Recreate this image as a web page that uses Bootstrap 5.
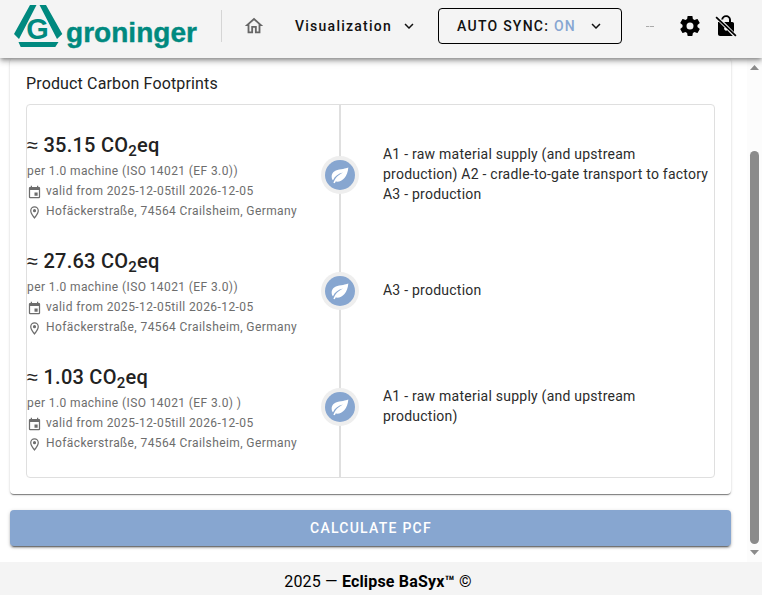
<!DOCTYPE html>
<html lang="en">
<head>
<meta charset="utf-8">
<meta name="viewport" content="width=device-width, initial-scale=1">
<title>Product Carbon Footprints</title>
<link href="https://cdn.jsdelivr.net/npm/bootstrap@5.3.0/dist/css/bootstrap.min.css" rel="stylesheet">
<style>
body{font-family:Roboto,"Liberation Sans",sans-serif;height:595px;overflow:hidden;background:#fff;color:#222}
svg{display:block;flex:none;fill:currentColor}
.shell{width:762px;height:595px}
.topbar{height:58px;padding-bottom:6px;background:#f4f4f4;box-shadow:0 2px 4px -1px rgba(0,0,0,.35),0 4px 5px rgba(0,0,0,.16),0 1px 10px rgba(0,0,0,.12);z-index:2;clip-path:inset(0 0 -16px 0)}
.brand-svg{margin-left:14px;color:#00897f}
.divider{width:1px;height:32px;background:#d5d5d5;margin-left:23px}
.home-ico{margin-left:21px;color:#666}
.nav-btn{font-size:14px;font-weight:500;letter-spacing:1.25px;color:#111;line-height:20px;padding:0;border:0;background:none}
.menu-btn{margin-left:30px}
.sync-btn{width:184px;height:36px;border:1px solid #000;border-radius:4px;margin-left:20px;padding-left:18px}
.sync-chev{margin-left:11px}
.sync-state{color:#87a6d2}
.dash{width:8px;height:1px;margin-left:24px;background:linear-gradient(90deg,#aaa 3px,#ddd 3px 4px,#aaa 4px)}
.lock-ico{margin-left:12px}
.pane{height:504px}
.main-col{width:747px;padding:0 16px 0 10px}
.pcf-card{height:436px;border:0;border-radius:4px;box-shadow:0 2px 1px -1px rgba(0,0,0,.3),0 1px 1px rgba(0,0,0,.22),0 1px 3px rgba(0,0,0,.14);padding:10px 16px 0}
.pcf-title{font-size:16px;line-height:32px;letter-spacing:.15px;margin-bottom:4px}
.frame{height:374px;border:1px solid #dfdfdf;border-radius:4px;padding:24px 0;background:linear-gradient(#dfdfdf,#dfdfdf) 312px 0/2px 100% no-repeat}
.entry{height:92px}
.entry-left{width:294px}
.amount{font-size:20px;font-weight:500;line-height:32px;height:32px;letter-spacing:.25px;white-space:nowrap}
.amount sub{font-size:15px}
.approx{font-family:"Liberation Sans",sans-serif;font-weight:400}
.meta-line{font-size:12px;line-height:20px;height:20px;letter-spacing:.4px;color:#6d6d6d;white-space:nowrap}
.node-dot{width:38px;height:38px;background:#eee}
.node-core{width:30px;height:30px;background:#87a6d0;color:#fff}
.stages{font-size:14px;line-height:20px;letter-spacing:.24px;padding-left:24px;padding-bottom:2px;color:#2b2b2b;white-space:nowrap}
.calc-btn{height:36px;margin-top:16px;background:#87a6d0;border:0;border-radius:4px;color:#fff;font-size:14px;font-weight:500;letter-spacing:1.25px;line-height:20px;padding:0 0 0 1px;box-shadow:0 3px 1px -2px rgba(0,0,0,.4),0 2px 2px rgba(0,0,0,.24),0 1px 4px rgba(0,0,0,.14)}
.track{width:15px;background:#fcfcfc;color:#8b8b8b;padding:7px 0}
.thumb{width:9px;height:393px;border-radius:5px;background:#8b8b8b;margin-bottom:6px}
.foot{height:33px;background:#f4f4f4;font-size:16px;letter-spacing:.18px;color:#000;padding:8px 6px 0 0}
</style>
</head>
<body>
<svg width="0" height="0" class="position-absolute">
<defs>
<path id="i-chev" d="M7.41,8.58L12,13.17L16.59,8.58L18,10L12,16L6,10L7.41,8.58Z"/>
<path id="i-cal" d="M19,19H5V8H19M16,1V3H8V1H6V3H5C3.89,3 3,3.89 3,5V19A2,2 0 0,0 5,21H19A2,2 0 0,0 21,19V5C21,3.89 20.1,3 19,3H18V1M17,12H12V17H17V12Z"/>
<path id="i-pin" d="M12,6.5A2.5,2.5 0 0,1 14.5,9A2.5,2.5 0 0,1 12,11.5A2.5,2.5 0 0,1 9.5,9A2.5,2.5 0 0,1 12,6.5M12,2A7,7 0 0,1 19,9C19,14.25 12,22 12,22C12,22 5,14.25 5,9A7,7 0 0,1 12,2M12,4A5,5 0 0,0 7,9C7,10 7,12 12,18.71C17,12 17,10 17,9A5,5 0 0,0 12,4Z"/>
<path id="i-leaf" d="M22,3C22,3 18,4.5 11,5.5C5,6.5 2,10 2,14C2,16 2.8,17.5 3.6,18.2C6,13 10,10.5 15.5,9C10,12 6.5,15 4,21.3L5.8,22L6.8,19.8C14,21 21,15 22,3Z"/>
</defs>
</svg>
<div class="shell d-flex flex-column">
<header class="topbar d-flex align-items-center flex-shrink-0 position-relative">
  <svg class="brand-svg" width="184" height="52" viewBox="14 0 184 52" role="img" aria-label="groninger">
    <path d="M30 5H36.5L19 39L14 34ZM39.500 5H46L62.300 34L57 39ZM18.500 42H58.500L55.300 47H20.700Z"/>
    <text x="26.300" y="39" font-family="Liberation Sans,sans-serif" font-weight="700" font-size="29" textLength="22.500" lengthAdjust="spacingAndGlyphs">G</text>
    <text x="66" y="41.500" font-family="Liberation Sans,sans-serif" font-weight="700" font-size="27.500" textLength="131" lengthAdjust="spacingAndGlyphs" stroke="currentColor" stroke-width=".4">groninger</text>
  </svg>
  <div class="divider"></div>
  <svg class="home-ico" width="22" height="24" viewBox="0 0 24 24"><path d="M12 5.69L17 10.19V18H15V12H9V18H7V10.19L12 5.69M12 3L2 12H5V20H11V14H13V20H19V12H22"/></svg>
  <button class="nav-btn menu-btn d-flex align-items-center">Visualization<svg class="ms-2" width="18" height="18" viewBox="0 0 24 24"><use href="#i-chev"/></svg></button>
  <button class="nav-btn sync-btn d-flex align-items-center"><span>AUTO SYNC: <span class="sync-state">ON</span></span><svg class="sync-chev" width="18" height="18" viewBox="0 0 24 24"><use href="#i-chev"/></svg></button>
  <div class="dash"></div>
  <svg class="ms-4 text-black" width="24" height="24" viewBox="0 0 24 24"><path d="M12,15.5A3.5,3.5 0 0,1 8.5,12A3.5,3.5 0 0,1 12,8.5A3.5,3.5 0 0,1 15.5,12A3.5,3.5 0 0,1 12,15.5M19.43,12.97C19.47,12.65 19.5,12.33 19.5,12C19.5,11.67 19.47,11.34 19.43,11L21.54,9.37C21.73,9.22 21.78,8.95 21.66,8.73L19.66,5.27C19.54,5.05 19.27,4.96 19.05,5.05L16.56,6.05C16.04,5.66 15.5,5.32 14.87,5.07L14.5,2.42C14.46,2.18 14.25,2 14,2H10C9.75,2 9.54,2.18 9.5,2.42L9.13,5.07C8.5,5.32 7.96,5.66 7.44,6.05L4.95,5.05C4.73,4.96 4.46,5.05 4.34,5.27L2.34,8.73C2.21,8.95 2.27,9.22 2.46,9.37L4.57,11C4.53,11.34 4.5,11.67 4.5,12C4.5,12.33 4.53,12.65 4.57,12.97L2.46,14.63C2.27,14.78 2.21,15.05 2.34,15.27L4.34,18.73C4.46,18.95 4.73,19.03 4.95,18.95L7.44,17.94C7.96,18.34 8.5,18.68 9.13,18.93L9.5,21.58C9.54,21.82 9.75,22 10,22H14C14.25,22 14.46,21.82 14.5,21.58L14.87,18.93C15.5,18.67 16.04,18.34 16.56,17.94L19.05,18.95C19.27,19.03 19.54,18.95 19.66,18.73L21.66,15.27C21.78,15.05 21.73,14.78 21.54,14.63L19.43,12.97Z"/></svg>
  <svg class="lock-ico text-black" width="24" height="24" viewBox="0 0 24 24"><path d="M7.2 5.600C7.700 3 9.500 1.200 12 1.200C14.800 1.200 17 3.300 17 6V8H18.200C19.300 8 20 8.800 20 9.800V18L10.200 8H15V6A2.900 2.900 0 0 0 9.200 5.600ZM4 8H5L10.500 13.500A2 2 0 0 0 13.300 16.300L18.800 22H6C4.900 22 4 21.100 4 20ZM2.700 2.500L22.500 21.200L21.300 22.500L1.500 3.700Z"/></svg>
</header>
<div class="pane d-flex flex-shrink-0">
  <main class="main-col d-flex flex-column">
    <section class="pcf-card card flex-shrink-0">
      <div class="pcf-title">Product Carbon Footprints</div>
      <div class="frame d-flex flex-column gap-4">
        <div class="entry d-flex align-items-center">
          <div class="entry-left"><div class="amount"><span class="approx">≈</span> 35.15 CO<sub>2</sub>eq</div><div class="meta-line">per 1.0 machine (ISO 14021 (EF 3.0))</div>
          <div class="meta-line d-flex"><svg class="me-1 mt-1" width="15" height="15" viewBox="0 0 24 24"><use href="#i-cal"/></svg>valid from 2025-12-05till 2026-12-05</div>
          <div class="meta-line d-flex"><svg class="me-1 mt-1" width="15" height="15" viewBox="0 0 24 24"><use href="#i-pin"/></svg>Hofäckerstraße, 74564 Crailsheim, Germany</div></div>
          <div class="node-dot rounded-circle d-flex align-items-center justify-content-center flex-shrink-0"><div class="node-core rounded-circle d-flex align-items-center justify-content-center"><svg width="20" height="20" viewBox="0 0 24 24"><use href="#i-leaf"/></svg></div></div>
          <div class="stages">A1 - raw material supply (and upstream<br>production) A2 - cradle-to-gate transport to factory<br>A3 - production</div>
        </div>
        <div class="entry d-flex align-items-center">
          <div class="entry-left"><div class="amount"><span class="approx">≈</span> 27.63 CO<sub>2</sub>eq</div><div class="meta-line">per 1.0 machine (ISO 14021 (EF 3.0))</div>
          <div class="meta-line d-flex"><svg class="me-1 mt-1" width="15" height="15" viewBox="0 0 24 24"><use href="#i-cal"/></svg>valid from 2025-12-05till 2026-12-05</div>
          <div class="meta-line d-flex"><svg class="me-1 mt-1" width="15" height="15" viewBox="0 0 24 24"><use href="#i-pin"/></svg>Hofäckerstraße, 74564 Crailsheim, Germany</div></div>
          <div class="node-dot rounded-circle d-flex align-items-center justify-content-center flex-shrink-0"><div class="node-core rounded-circle d-flex align-items-center justify-content-center"><svg width="20" height="20" viewBox="0 0 24 24"><use href="#i-leaf"/></svg></div></div>
          <div class="stages">A3 - production</div>
        </div>
        <div class="entry d-flex align-items-center">
          <div class="entry-left"><div class="amount"><span class="approx">≈</span> 1.03 CO<sub>2</sub>eq</div><div class="meta-line">per 1.0 machine (ISO 14021 (EF 3.0) )</div>
          <div class="meta-line d-flex"><svg class="me-1 mt-1" width="15" height="15" viewBox="0 0 24 24"><use href="#i-cal"/></svg>valid from 2025-12-05till 2026-12-05</div>
          <div class="meta-line d-flex"><svg class="me-1 mt-1" width="15" height="15" viewBox="0 0 24 24"><use href="#i-pin"/></svg>Hofäckerstraße, 74564 Crailsheim, Germany</div></div>
          <div class="node-dot rounded-circle d-flex align-items-center justify-content-center flex-shrink-0"><div class="node-core rounded-circle d-flex align-items-center justify-content-center"><svg width="20" height="20" viewBox="0 0 24 24"><use href="#i-leaf"/></svg></div></div>
          <div class="stages">A1 - raw material supply (and upstream<br>production)</div>
        </div>
      </div>
    </section>
    <button class="calc-btn btn w-100 flex-shrink-0">CALCULATE PCF</button>
  </main>
  <div class="track d-flex flex-column align-items-center">
    <svg width="9" height="5" viewBox="0 0 9 5"><path d="M4.500 0L9 5H0Z"/></svg>
    <div class="thumb mt-auto"></div>
    <svg width="9" height="5" viewBox="0 0 9 5"><path d="M0 0H9L4.500 5Z"/></svg>
  </div>
</div>
<footer class="foot d-flex justify-content-center flex-shrink-0"><div class="foot-text">2025 — <strong>Eclipse BaSyx™</strong> ©</div></footer>
</div>
<script src="https://cdn.jsdelivr.net/npm/bootstrap@5.3.0/dist/js/bootstrap.bundle.min.js"></script>
</body>
</html>
